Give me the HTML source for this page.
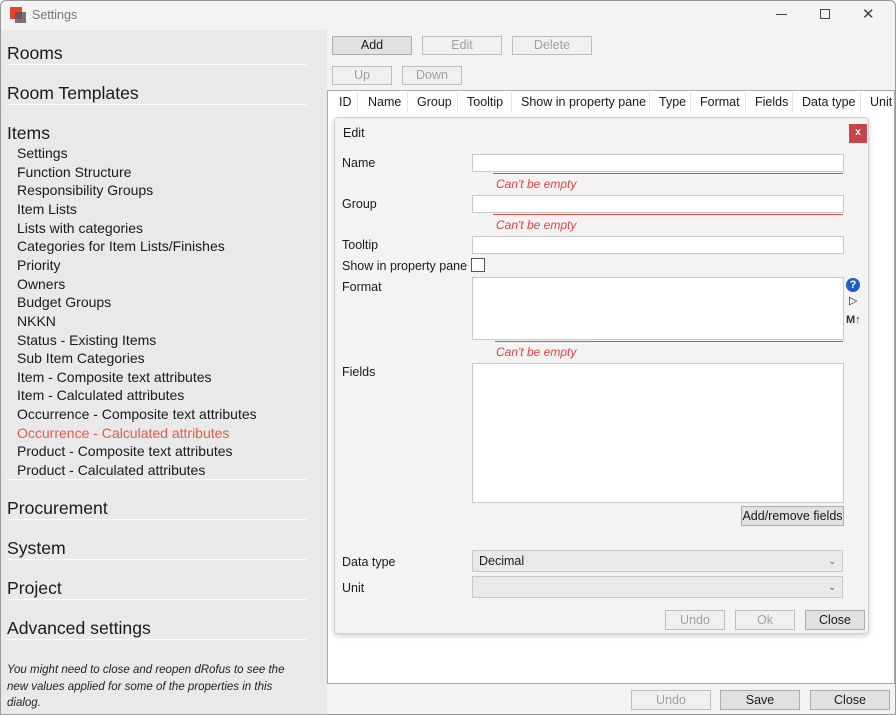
<!DOCTYPE html>
<html><head><meta charset="utf-8"><style>
*{margin:0;padding:0;box-sizing:border-box}
body{width:896px;height:715px;overflow:hidden;background:#f3f3f3;font-family:"Liberation Sans",sans-serif;color:#1a1a1a;position:relative}
.a{position:absolute;white-space:nowrap}
.h{font-size:17.6px;left:7px;line-height:20px}
.l{position:absolute;left:7px;width:299px;height:1px;background:#fff}
.s{font-size:14px;left:17px;line-height:18px}
.btn{position:absolute;border:1px solid #bdbdbd;background:#f0f0f0;font-size:12.5px;text-align:center;color:#a0a0a0;line-height:17px}
.btn.e{background:#e1e1e1;border-color:#adadad;color:#1a1a1a}
.lab{font-size:12.5px;left:342px;line-height:16px}
.in{position:absolute;background:#fff;border:1px solid #c8c8c8}
.err{position:absolute;height:1px;background:#e84a4a}
.et{font-size:12px;color:#e53e3e;font-style:italic;line-height:14px}
.th{font-size:12.5px;line-height:22px;top:91px}
.vs{position:absolute;top:92px;width:1px;height:20px;background:#e5e5e5}
</style></head><body>
<div class="a" style="left:0;top:0;width:896px;height:30px;background:#f3f3f3"></div>
<div class="a" style="left:10px;top:7px;width:12px;height:12px;background:#e8432d"></div>
<div class="a" style="left:15px;top:12px;width:11px;height:11px;background:#555;opacity:.8"></div>
<div class="a" style="left:32px;top:8px;font-size:12.5px;color:#777">Settings</div>
<div class="a" style="left:776px;top:14px;width:11px;height:1px;background:#444"></div>
<div class="a" style="left:820px;top:9px;width:10px;height:10px;border:1px solid #444"></div>
<div class="a" style="left:862px;top:5px;font-size:15px;color:#444">✕</div>

<div class="a" style="left:0;top:30px;width:327px;height:685px;background:#e8e9e8"></div>
<div class="a h" style="top:43px">Rooms</div><div class="l" style="top:64px"></div>
<div class="a h" style="top:83px">Room Templates</div><div class="l" style="top:104px"></div>
<div class="a h" style="top:123px">Items</div>
<div class="a s" style="top:144px">Settings</div>
<div class="a s" style="top:163px">Function Structure</div>
<div class="a s" style="top:181px">Responsibility Groups</div>
<div class="a s" style="top:200px">Item Lists</div>
<div class="a s" style="top:219px">Lists with categories</div>
<div class="a s" style="top:237px">Categories for Item Lists/Finishes</div>
<div class="a s" style="top:256px">Priority</div>
<div class="a s" style="top:275px">Owners</div>
<div class="a s" style="top:293px">Budget Groups</div>
<div class="a s" style="top:312px">NKKN</div>
<div class="a s" style="top:331px">Status - Existing Items</div>
<div class="a s" style="top:349px">Sub Item Categories</div>
<div class="a s" style="top:368px">Item - Composite text attributes</div>
<div class="a s" style="top:386px">Item - Calculated attributes</div>
<div class="a s" style="top:405px">Occurrence - Composite text attributes</div>
<div class="a s" style="top:424px;color:#e85a48">Occurrence - Calculated attributes</div>
<div class="a s" style="top:442px">Product - Composite text attributes</div>
<div class="a s" style="top:461px">Product - Calculated attributes</div>
<div class="l" style="top:479px"></div>
<div class="a h" style="top:498px">Procurement</div><div class="l" style="top:519px"></div>
<div class="a h" style="top:538px">System</div><div class="l" style="top:559px"></div>
<div class="a h" style="top:578px">Project</div><div class="l" style="top:599px"></div>
<div class="a h" style="top:618px">Advanced settings</div><div class="l" style="top:639px"></div>
<div class="a" style="left:7px;top:662px;font-size:11.5px;font-style:italic;line-height:16.5px;color:#222">You might need to close and reopen dRofus to see the<br>new values applied for some of the properties in this<br>dialog.</div>

<div class="btn e" style="left:332px;top:36px;width:80px;height:19px">Add</div>
<div class="btn" style="left:422px;top:36px;width:80px;height:19px">Edit</div>
<div class="btn" style="left:512px;top:36px;width:80px;height:19px">Delete</div>
<div class="btn" style="left:332px;top:66px;width:60px;height:19px">Up</div>
<div class="btn" style="left:402px;top:66px;width:60px;height:19px">Down</div>

<div class="a" style="left:327px;top:90px;width:568px;height:594px;background:#fff;border:1px solid #aaa"></div>
<div class="a th" style="left:339px">ID</div><div class="vs" style="left:357px"></div>
<div class="a th" style="left:368px">Name</div><div class="vs" style="left:407px"></div>
<div class="a th" style="left:417px">Group</div><div class="vs" style="left:457px"></div>
<div class="a th" style="left:467px">Tooltip</div><div class="vs" style="left:511px"></div>
<div class="a th" style="left:521px">Show in property pane</div><div class="vs" style="left:649px"></div>
<div class="a th" style="left:659px">Type</div><div class="vs" style="left:690px"></div>
<div class="a th" style="left:700px">Format</div><div class="vs" style="left:745px"></div>
<div class="a th" style="left:755px">Fields</div><div class="vs" style="left:792px"></div>
<div class="a th" style="left:802px">Data type</div><div class="vs" style="left:860px"></div>
<div class="a th" style="left:870px">Unit</div>

<div class="a" style="left:334px;top:117px;width:535px;height:517px;background:#f3f3f3;border:1px solid #cfcfcf;border-radius:4px;box-shadow:0 2px 6px rgba(0,0,0,.2)"></div>
<div class="a" style="left:343px;top:125px;font-size:12.5px;line-height:16px">Edit</div>
<div class="a" style="left:849px;top:124px;width:18px;height:19px;background:#c9444a;color:#fff;font-size:10px;text-align:center;line-height:18px;font-weight:bold">x</div>

<div class="a lab" style="top:155px">Name</div>
<div class="in" style="left:472px;top:154px;width:372px;height:18px"></div>
<div class="err" style="left:493px;top:173px;width:350px"></div>
<div class="a et" style="left:496px;top:177px">Can't be empty</div>

<div class="a lab" style="top:196px">Group</div>
<div class="in" style="left:472px;top:195px;width:372px;height:18px"></div>
<div class="err" style="left:493px;top:214px;width:350px"></div>
<div class="a et" style="left:496px;top:218px">Can't be empty</div>

<div class="a lab" style="top:237px">Tooltip</div>
<div class="in" style="left:472px;top:236px;width:372px;height:18px"></div>

<div class="a lab" style="top:258px">Show in property pane</div>
<div class="in" style="left:471px;top:258px;width:14px;height:14px;border-color:#555"></div>

<div class="a lab" style="top:279px">Format</div>
<div class="in" style="left:472px;top:277px;width:372px;height:63px"></div>
<div class="err" style="left:495px;top:341px;width:348px"></div>
<div class="a et" style="left:496px;top:345px">Can't be empty</div>
<div class="a" style="left:846px;top:278px;width:14px;height:14px;border-radius:50%;background:#1f5fc4;color:#fff;font-size:11px;font-weight:bold;text-align:center;line-height:14px">?</div>
<div class="a" style="left:849px;top:294px;font-size:11px;line-height:14px">▷</div>
<div class="a" style="left:846px;top:313px;font-size:11px;line-height:14px;font-weight:bold;color:#333">M↑</div>

<div class="a lab" style="top:364px">Fields</div>
<div class="in" style="left:472px;top:363px;width:372px;height:140px"></div>
<div class="btn e" style="left:741px;top:506px;width:103px;height:20px;line-height:18px">Add/remove fields</div>

<div class="a lab" style="top:554px">Data type</div>
<div class="a" style="left:472px;top:550px;width:371px;height:22px;background:#e9e9e9;border:1px solid #c8c8c8;font-size:12.5px;line-height:20px;padding-left:6px">Decimal<span style="position:absolute;right:6px;font-size:9px;color:#555">⌄</span></div>
<div class="a lab" style="top:580px">Unit</div>
<div class="a" style="left:472px;top:576px;width:371px;height:22px;background:#e9e9e9;border:1px solid #c8c8c8;font-size:12.5px;line-height:20px"><span style="position:absolute;right:6px;font-size:9px;color:#555">⌄</span></div>

<div class="btn" style="left:665px;top:610px;width:60px;height:20px;line-height:18px">Undo</div>
<div class="btn" style="left:735px;top:610px;width:60px;height:20px;line-height:18px">Ok</div>
<div class="btn e" style="left:805px;top:610px;width:60px;height:20px;line-height:18px">Close</div>

<div class="btn" style="left:631px;top:690px;width:80px;height:20px;line-height:18px">Undo</div>
<div class="btn e" style="left:720px;top:690px;width:80px;height:20px;line-height:18px">Save</div>
<div class="btn e" style="left:810px;top:690px;width:80px;height:20px;line-height:18px">Close</div>
<div class="a" style="left:0;top:0;width:896px;height:715px;border:1px solid #999;border-radius:6px 6px 0 0;pointer-events:none"></div>
</body></html>
